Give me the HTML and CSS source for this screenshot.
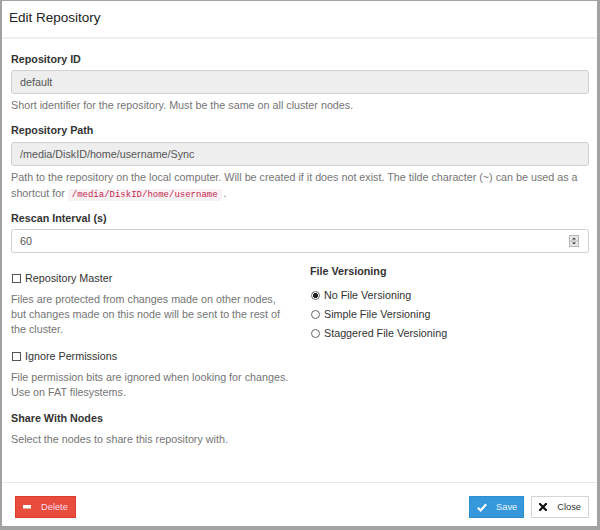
FILE: index.html
```html
<!DOCTYPE html>
<html>
<head>
<meta charset="utf-8">
<link rel="stylesheet" href="styles.css">
</head>
<body>
<div class="modal">
  <div class="modal-header">Edit Repository</div>
  <div class="modal-body">
    <div class="group">
      <div class="label">Repository ID</div>
      <input class="field disabled" value="default" readonly>
      <p class="help">Short identifier for the repository. Must be the same on all cluster nodes.</p>
    </div>
    <div class="group">
      <div class="label gap4">Repository Path</div>
      <input class="field disabled" value="/media/DiskID/home/username/Sync" readonly>
      <p class="help">Path to the repository on the local computer. Will be created if it does not exist. The tilde character (~) can be used as a shortcut for <code>/media/DiskID/home/username</code>.</p>
    </div>
    <div class="group">
      <div class="label">Rescan Interval (s)</div>
      <div class="field number">
        <span class="num-value">60</span>
        <span class="spinner">
          <svg width="10" height="12" viewBox="0 0 10 12">
            <rect x="0.5" y="0.5" width="9" height="11" fill="#e8e8e8" stroke="#b5b5b5"/>
            <line x1="1" y1="6" x2="9" y2="6" stroke="#b5b5b5"/>
            <path d="M3 4.5 L5 2.5 L7 4.5 Z" fill="#333"/>
            <path d="M3 7.5 L5 9.5 L7 7.5 Z" fill="#333"/>
          </svg>
        </span>
      </div>
    </div>
    <div class="columns">
      <div class="col-left">
        <label class="check"><span class="box"></span>Repository Master</label>
        <p class="help sub">Files are protected from changes made on other nodes, but changes made on this node will be sent to the rest of the cluster.</p>
        <label class="check next"><span class="box"></span>Ignore Permissions</label>
        <p class="help sub">File permission bits are ignored when looking for changes. Use on FAT filesystems.</p>
        <div class="label next">Share With Nodes</div>
        <p class="help sub">Select the nodes to share this repository with.</p>
      </div>
      <div class="col-right">
        <div class="label">File Versioning</div>
        <div class="radios">
          <label class="radio"><span class="circle checked"></span>No File Versioning</label>
          <label class="radio"><span class="circle"></span>Simple File Versioning</label>
          <label class="radio"><span class="circle"></span>Staggered File Versioning</label>
        </div>
      </div>
    </div>
  </div>
  <div class="modal-footer">
    <button class="btn btn-danger">
      <svg width="8" height="4" viewBox="0 0 8 4"><rect x="0" y="0" width="8" height="3.5" fill="#fff"/></svg>
      <span>Delete</span>
    </button>
    <div class="spacer"></div>
    <button class="btn btn-primary">
      <svg width="10" height="9" viewBox="0 0 10 9"><path d="M0.8 4.8 L3.6 7.4 L9.2 1.2" fill="none" stroke="#fff" stroke-width="2.2"/></svg>
      <span>Save</span>
    </button>
    <button class="btn btn-default">
      <svg width="8" height="8" viewBox="0 0 8 8"><path d="M1 1 L7 7 M7 1 L1 7" stroke="#111" stroke-width="2.2" stroke-linecap="square"/></svg>
      <span>Close</span>
    </button>
  </div>
</div>
</body>
</html>
```

FILE: styles.css
```css
* { box-sizing: border-box; }

html, body {
  margin: 0;
  padding: 0;
  background: #fff;
}

body {
  font-family: "Liberation Sans", Arial, sans-serif;
  font-size: 10.75px;
  color: #333;
}

.modal {
  width: 600px;
  height: 530px;
  border-style: solid;
  border-color: #a2a2a2;
  border-width: 1px 3px 4px 2px;
  display: flex;
  flex-direction: column;
  background: #fff;
}

.modal-header {
  font-size: 13.5px;
  line-height: 34px;
  height: 38px;
  padding-left: 7px;
  color: #222;
  border-bottom: 2px solid #f0f0f0;
  flex: none;
}

.modal-body {
  flex: 1;
  padding: 13px 8px 0 9px;
}

.group {
  margin-bottom: 10px;
}

.label {
  font-weight: bold;
  line-height: 15px;
  color: #333;
}

.field {
  display: block;
  width: 100%;
  height: 24px;
  margin-top: 3px;
  border: 1px solid #d0d0d0;
  border-radius: 3px;
  padding: 0 8px;
  font-family: "Liberation Sans", Arial, sans-serif;
  font-size: 10.75px;
  color: #555;
  background: #fff;
  outline: none;
}

.gap4 + .field {
  margin-top: 4px;
}

.field.disabled {
  background: #eeeeee;
}

.number {
  display: flex;
  align-items: center;
  justify-content: space-between;
  padding: 0 9px 0 8px;
}

.spinner {
  display: flex;
}

.help {
  margin: 4px 0 0;
  font-size: 10.75px;
  line-height: 15.3px;
  color: #757575;
}

code {
  font-family: "Liberation Mono", "Courier New", monospace;
  font-size: 9px;
  color: #c7254e;
  background: #f9f2f4;
  padding: 1px 4px;
  margin: 0 2px 0 0;
  border-radius: 2px;
  line-height: 10px;
}

.columns {
  display: grid;
  grid-template-columns: 278px 1fr;
  gap: 21px;
}

.col-left {
  padding-top: 8px;
}

.col-right {
  padding-top: 1px;
}

.check {
  display: flex;
  align-items: center;
  line-height: 15px;
  color: #333;
}

.box {
  display: inline-block;
  width: 9px;
  height: 9px;
  border: 1px solid #555;
  background: #fff;
  margin: 0 4px 0 1px;
}

.help.sub {
  margin-top: 6px;
}

.next {
  margin-top: 11px;
}

.radios {
  margin-top: 7px;
}

.radio {
  display: flex;
  align-items: center;
  line-height: 19px;
  color: #333;
}

.circle {
  display: inline-block;
  width: 9px;
  height: 9px;
  border: 1px solid #666;
  border-radius: 50%;
  margin: 0 4px 0 1px;
  background: #fff;
}

.circle.checked {
  background: radial-gradient(circle, #222 0 2.3px, #fff 2.8px);
}

.modal-footer {
  flex: none;
  display: flex;
  align-items: flex-start;
  height: 44px;
  border-top: 1px solid #e8e8e8;
  padding: 13px 8px 0 13px;
}

.spacer {
  flex: 1;
}

.btn {
  display: flex;
  align-items: center;
  height: 22px;
  padding: 0 7px 0 7px;
  border: 1px solid transparent;
  border-radius: 0;
  font-family: "Liberation Sans", Arial, sans-serif;
  font-size: 9.3px;
  gap: 10px;
  cursor: pointer;
}

.btn-danger {
  background: #e74c3c;
  border-color: #dc3d2d;
  color: #fde;
  padding-right: 7px;
}

.btn-primary {
  background: #3498db;
  border-color: #2c8ed0;
  color: #eef6ff;
  gap: 9px;
  padding-right: 6px;
}

.btn-default {
  background: #fff;
  border-color: #d5d5d5;
  color: #333;
  margin-left: 7px;
}
```
